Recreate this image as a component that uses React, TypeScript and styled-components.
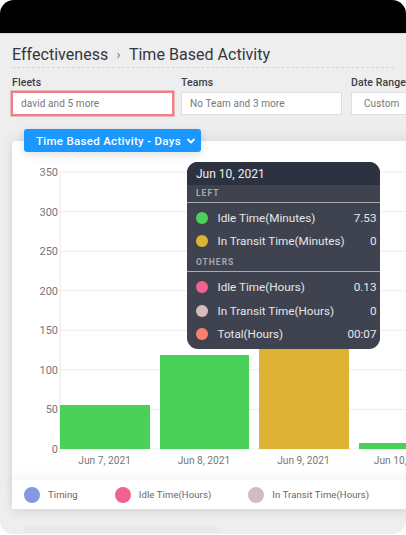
import React from "react";
import styled, { createGlobalStyle } from "styled-components";

const Global = createGlobalStyle`
  html, body { margin: 0; padding: 0; background: #fff; }
  body { font-family: Roboto, "Liberation Sans", sans-serif; }
  #root { width: 406px; height: 535px; overflow: hidden; }
`;

const Screen = styled.div`
  width: 406px;
  height: 533px;
  border-radius: 14px;
  background: #eeeeee;
  overflow: hidden;
  display: flex;
  flex-direction: column;
  box-shadow: 0 1px 2px rgba(0, 0, 0, 0.08);
`;
const TopBar = styled.div`
  height: 33px;
  flex: none;
  background: #000;
  border-bottom: 1px solid #d8d8d8;
`;
const Crumbs = styled.div`
  margin: 0 12px;
  height: 34px;
  box-sizing: border-box;
  padding-bottom: 2px;
  flex: none;
  display: flex;
  align-items: flex-end;
  gap: 8.5px;
  font-size: 16px;
  line-height: 20px;
  letter-spacing: 0.03px;
  color: #33373f;
  border-bottom: 1px dashed #d6d6d6;
`;
const Sep = styled.span`
  font-size: 12px;
  color: #666;
`;
const Filters = styled.div`
  display: flex;
  gap: 8px;
  margin-left: 12px;
  padding-top: 8px;
  width: 460px;
`;
const Field = styled.div<{ $w: number }>`
  width: ${(p) => p.$w}px;
  flex: none;
  display: flex;
  flex-direction: column;
  gap: 3px;
`;
const Label = styled.div`
  font-size: 10.5px;
  font-weight: 500;
  line-height: 13px;
  color: #3b3f46;
  letter-spacing: 0.1px;
`;
const Input = styled.div<{ $focus?: boolean; $pad?: number; $w?: number }>`
  height: 23px;
  width: ${(p) => (p.$w ? `${p.$w}px` : "auto")};
  box-sizing: border-box;
  background: #fff;
  border: 1px solid ${(p) => (p.$focus ? "#ee8088" : "#dedede")};
  box-shadow: ${(p) => (p.$focus ? "0 0 0 1.5px #ee8088" : "none")};
  padding-left: ${(p) => p.$pad ?? 8}px;
  font-size: 10px;
  color: #777;
  display: flex;
  align-items: center;
  letter-spacing: 0.1px;
`;
const Card = styled.div`
  position: relative;
  margin: 26px 0 0 12px;
  width: 400px;
  height: 368px;
  flex: none;
  background: #fff;
  border-radius: 4px 0 0 0;
  display: flex;
  flex-direction: column;
  box-shadow: 0 -6px 14px rgba(0, 0, 0, 0.05), 0 4px 10px rgba(0, 0, 0, 0.08);
`;
const Pill = styled.div`
  position: absolute;
  left: 12px;
  top: -12px;
  width: 177px;
  height: 23px;
  box-sizing: border-box;
  padding: 0 5px 0 12px;
  border-radius: 3px;
  background: #1a98ff;
  color: #fff;
  font-size: 11.5px;
  font-weight: 500;
  letter-spacing: 0.3px;
  white-space: nowrap;
  display: flex;
  align-items: center;
  justify-content: space-between;
  box-shadow: 0 3px 8px rgba(0, 0, 0, 0.12);
`;
const ChartArea = styled.div`
  flex: 1;
  min-height: 0;
`;
const Chart = styled.svg`
  display: block;
  text {
    font-family: Roboto, "Liberation Sans", sans-serif;
    font-size: 11px;
    fill: #777;
  }
  .date {
    font-size: 10.2px;
  }
`;
const Legend = styled.div`
  height: 29px;
  flex: none;
  display: flex;
  align-items: center;
  padding-left: 12px;
  gap: 37px;
  background: #fff;
  box-shadow: 0 -6px 8px rgba(0, 0, 0, 0.035);
  white-space: nowrap;
`;
const LegendItem = styled.div`
  display: flex;
  align-items: center;
  gap: 8px;
  font-size: 9.5px;
  color: #666;
  letter-spacing: 0.1px;
`;
const LegendDot = styled.span<{ $c: string }>`
  width: 16px;
  height: 16px;
  border-radius: 50%;
  background: ${(p) => p.$c};
  flex: none;
`;
const NextCard = styled.div`
  margin: 21px 0 0 25px;
  width: 192px;
  height: 20px;
  flex: none;
  background: #eaeaea;
  box-shadow: 0 -2px 5px rgba(0, 0, 0, 0.05);
`;
const Tooltip = styled.div`
  position: absolute;
  left: 175px;
  top: 21px;
  width: 193px;
  height: 187px;
  border-radius: 11px;
  overflow: hidden;
  background: #3f4350;
  color: #e6e6e8;
  font-size: 11.7px;
`;
const TipHead = styled.div`
  height: 23px;
  background: #2d3240;
  display: flex;
  align-items: center;
  padding-left: 9px;
  font-size: 12px;
  color: #f0f0f2;
`;
const TipGroup = styled.div`
  height: 18px;
  box-sizing: border-box;
  padding: 0 0 1px 9px;
  display: flex;
  align-items: center;
  font-size: 8.5px;
  font-weight: 700;
  letter-spacing: 1px;
  color: #a5a8b0;
  border-bottom: 1px solid #a9abb1;
`;
const TipList = styled.div`
  padding: 3.5px 0 1px;
`;
const TipRow = styled.div`
  height: 23.3px;
  display: flex;
  align-items: center;
  padding: 0 3.5px 0 9px;
  gap: 9.5px;
`;
const TipDot = styled.span<{ $c: string }>`
  width: 12px;
  height: 12px;
  border-radius: 50%;
  background: ${(p) => p.$c};
  flex: none;
`;
const TipName = styled.span`
  flex: 1;
  white-space: nowrap;
`;

const ticks = [350, 300, 250, 200, 150, 100, 50, 0];
const yOf = (v: number) => 308 - v * 0.7914;
const bars = [
  { x: 48, w: 90, top: 264, c: "#49d15a" },
  { x: 148, w: 89, top: 214, c: "#49d15a" },
  { x: 247, w: 90, top: 190, c: "#dcb334" },
  { x: 347, w: 60, top: 302, c: "#49d15a" },
];
const dates = [
  { x: 92.6, t: "Jun 7, 2021" },
  { x: 192, t: "Jun 8, 2021" },
  { x: 291.5, t: "Jun 9, 2021" },
  { x: 391, t: "Jun 10, 2021" },
];

export default function App() {
  return (
    <>
      <Global />
      <Screen>
        <TopBar />
        <Crumbs>
          <span>Effectiveness</span>
          <Sep>›</Sep>
          <span>Time Based Activity</span>
        </Crumbs>
        <Filters>
          <Field $w={161}>
            <Label>Fleets</Label>
            <Input $focus>david and 5 more</Input>
          </Field>
          <Field $w={162}>
            <Label>Teams</Label>
            <Input $w={161}>No Team and 3 more</Input>
          </Field>
          <Field $w={110}>
            <Label>Date Range</Label>
            <Input $pad={12}>Custom</Input>
          </Field>
        </Filters>
        <Card>
          <Pill>
            <span>Time Based Activity - Days</span>
            <svg width="10" height="10" viewBox="0 0 10 10" fill="none">
              <path d="M2 3.5 5 6.5 8 3.5" stroke="#fff" strokeWidth="1.8" strokeLinecap="round" strokeLinejoin="round" />
            </svg>
          </Pill>
          <ChartArea>
            <Chart width="394" height="339" viewBox="0 0 394 339">
              {ticks.map((t) => (
                <g key={t}>
                  <line x1="48" x2="394" y1={yOf(t)} y2={yOf(t)} stroke="#ececec" />
                  <text x="46" y={yOf(t) + 4} textAnchor="end">{t}</text>
                </g>
              ))}
              <line x1="48" x2="48" y1={yOf(350)} y2={yOf(0) + 5} stroke="#e6e6e6" />
              {bars.map((b) => (
                <rect key={b.x} x={b.x} y={b.top} width={b.w} height={308 - b.top} fill={b.c} />
              ))}
              {dates.map((d) => (
                <text key={d.t} className="date" x={d.x} y="323" textAnchor="middle">{d.t}</text>
              ))}
            </Chart>
          </ChartArea>
          <Legend>
            <LegendItem><LegendDot $c="#8598e4" />Timing</LegendItem>
            <LegendItem><LegendDot $c="#f2628f" />Idle Time(Hours)</LegendItem>
            <LegendItem><LegendDot $c="#d4bcbd" />In Transit Time(Hours)</LegendItem>
          </Legend>
          <Tooltip>
            <TipHead>Jun 10, 2021</TipHead>
            <TipGroup>LEFT</TipGroup>
            <TipList>
              <TipRow><TipDot $c="#49d15a" /><TipName>Idle Time(Minutes)</TipName><span>7.53</span></TipRow>
              <TipRow><TipDot $c="#dcb334" /><TipName>In Transit Time(Minutes)</TipName><span>0</span></TipRow>
            </TipList>
            <TipGroup>OTHERS</TipGroup>
            <TipList>
              <TipRow><TipDot $c="#f2628f" /><TipName>Idle Time(Hours)</TipName><span>0.13</span></TipRow>
              <TipRow><TipDot $c="#d4bcbd" /><TipName>In Transit Time(Hours)</TipName><span>0</span></TipRow>
              <TipRow><TipDot $c="#fb8070" /><TipName>Total(Hours)</TipName><span>00:07</span></TipRow>
            </TipList>
          </Tooltip>
        </Card>
        <NextCard />
      </Screen>
    </>
  );
}
